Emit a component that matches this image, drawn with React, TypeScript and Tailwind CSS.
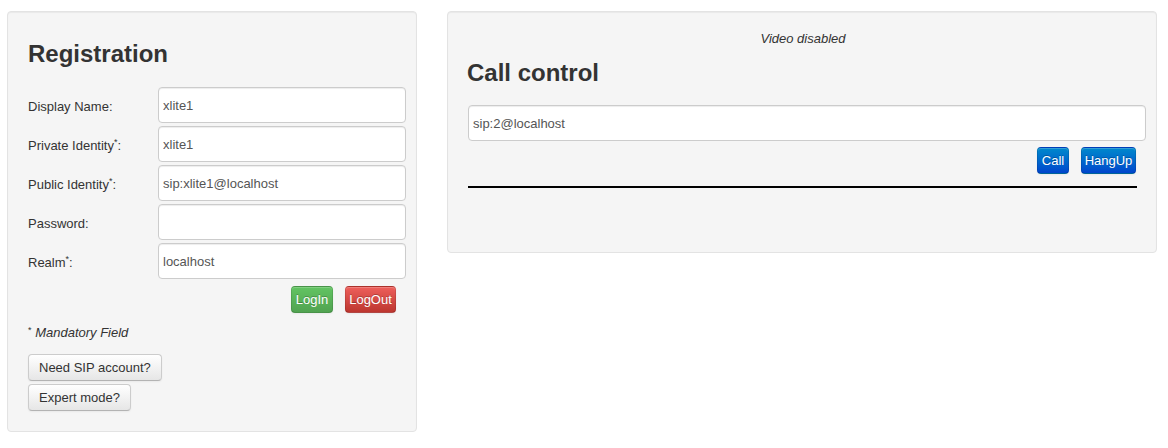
import React, { type FC, type ReactNode } from "react";

const fields: { label: string; required?: boolean; value: string }[] = [
  { label: "Display Name", value: "xlite1" },
  { label: "Private Identity", required: true, value: "xlite1" },
  { label: "Public Identity", required: true, value: "sip:xlite1@localhost" },
  { label: "Password", value: "" },
  { label: "Realm", required: true, value: "localhost" },
];

const Star = () => <sup className="text-[9px]">*</sup>;

const Well: FC<{ className?: string; children: ReactNode }> = ({ className, children }) => (
  <div
    className={`rounded-[4px] border border-[#e3e3e3] bg-[#f5f5f5] shadow-[inset_0_1px_1px_rgba(0,0,0,0.05)] ${className ?? ""}`}
  >
    {children}
  </div>
);

const TextInput: FC<{ value: string; className?: string }> = ({ value, className }) => (
  <input
    readOnly
    value={value}
    className={`h-[36px] rounded-[4px] border border-[#cccccc] bg-white px-[4px] pt-[1px] text-[13px] text-[#555555] shadow-[inset_0_1px_1px_rgba(0,0,0,0.075)] outline-none ${className ?? ""}`}
  />
);

type Tone = "green" | "red" | "blue";

const toneCls: Record<Tone, string> = {
  green: "from-[#62c462] to-[#51a351]",
  red: "from-[#ee5f5b] to-[#bd362f]",
  blue: "from-[#0088cc] to-[#0044cc]",
};

const SmallBtn: FC<{ tone: Tone; w: string; children: ReactNode }> = ({ tone, w, children }) => (
  <button
    className={`${w} h-[27px] rounded-[4px] border border-[rgba(0,0,0,0.1)] border-b-[rgba(0,0,0,0.25)] bg-linear-to-b ${toneCls[tone]} text-center text-[13px] text-white [text-shadow:0_-1px_0_rgba(0,0,0,0.25)] shadow-[inset_0_1px_0_rgba(255,255,255,0.2),0_1px_2px_rgba(0,0,0,0.05)]`}
  >
    {children}
  </button>
);

const DefaultBtn: FC<{ children: ReactNode }> = ({ children }) => (
  <button className="h-[27px] w-fit rounded-[4px] border border-[#cccccc] border-b-[#b3b3b3] bg-linear-to-b from-white to-[#e6e6e6] px-[10px] text-[13px] text-[#333333] shadow-[inset_0_1px_0_rgba(255,255,255,0.2),0_1px_2px_rgba(0,0,0,0.05)]">
    {children}
  </button>
);

export default function App() {
  return (
    <div className="flex min-h-[448px] items-start gap-[30px] bg-white pt-[11px] pl-[7px] font-['Liberation_Sans',Arial,sans-serif] text-[#333333]">
      {/* registration */}
      <Well className="w-[410px] pt-[28px] pb-[20px] pl-[20px]">
        <h2 className="text-[24px] leading-[28px] font-bold text-[#333333]">Registration</h2>
        <div className="mt-[19px] flex w-[378px] flex-col gap-[3px]">
          {fields.map((f) => (
            <div key={f.label} className="flex items-center">
              <label className="w-[130px] pt-[3px] text-[13px] leading-[18px]">
                {f.label}
                {f.required && <Star />}:
              </label>
              <TextInput value={f.value} className="w-[248px]" />
            </div>
          ))}
        </div>
        <div className="mt-[7px] flex w-[378px] justify-end gap-[12px] pr-[10px]">
          <SmallBtn tone="green" w="w-[42px]">LogIn</SmallBtn>
          <SmallBtn tone="red" w="w-[51px]">LogOut</SmallBtn>
        </div>
        <p className="mt-[11px] text-[13px] leading-[18px]">
          <Star /> <i>Mandatory Field</i>
        </p>
        <div className="mt-[12px] flex flex-col gap-[3px]">
          <DefaultBtn>Need SIP account?</DefaultBtn>
          <DefaultBtn>Expert mode?</DefaultBtn>
        </div>
      </Well>

      {/* call control */}
      <Well className="h-[242px] w-[710px] pt-[18px] pl-[19px]">
        <div className="w-[672px] text-center text-[13px] leading-[18px] italic">Video disabled</div>
        <h2 className="mt-[11px] text-[24px] leading-[28px] font-bold text-[#333333]">Call control</h2>
        <div className="mt-[18px] ml-[1px] w-[678px]">
          <TextInput value="sip:2@localhost" className="w-[678px]" />
          <div className="mt-[6px] flex justify-end gap-[12px] pr-[10px]">
            <SmallBtn tone="blue" w="w-[32px]">Call</SmallBtn>
            <SmallBtn tone="blue" w="w-[55px]">HangUp</SmallBtn>
          </div>
          <div className="mt-[12px] h-[2px] w-[669px] bg-black" />
        </div>
      </Well>
    </div>
  );
}
